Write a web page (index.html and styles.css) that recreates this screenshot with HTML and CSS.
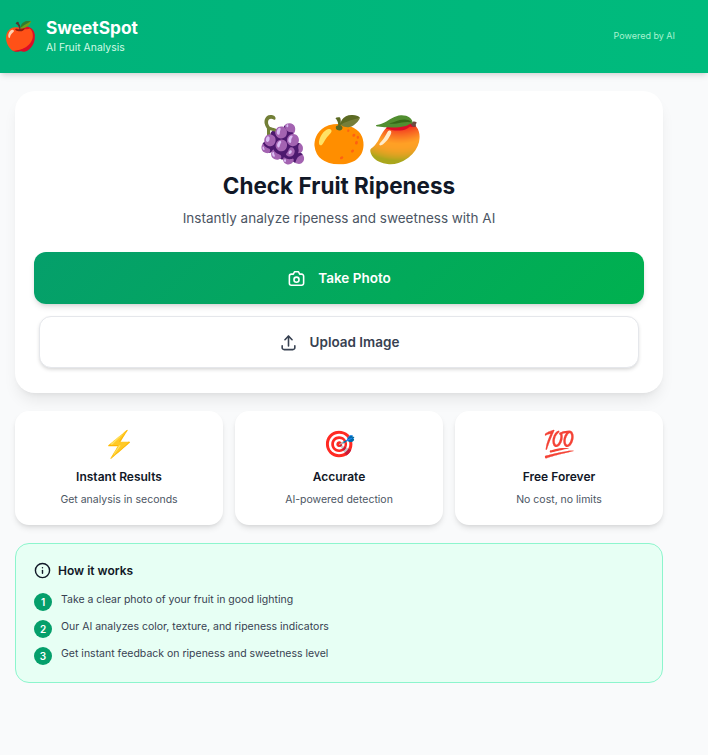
FILE: index.html
```html
<!DOCTYPE html>
<html lang="en">
<head>
    <meta charset="UTF-8">
    <meta name="viewport" content="width=device-width, initial-scale=1.0">
    <title>SweetSpot - AI Fruit Analysis</title>
    <link rel="stylesheet" href="styles.css">
</head>
<body>
    <header class="app-header">
        <div class="brand">
            <span class="brand-emoji">🍎</span>
            <div>
                <h1 class="brand-name">SweetSpot</h1>
                <p class="brand-tagline">AI Fruit Analysis</p>
            </div>
        </div>
        <span class="powered">Powered by AI</span>
    </header>

    <main class="content">
        <section class="hero">
            <div class="hero-emoji">🍇🍊🥭</div>
            <h2 class="hero-title">Check Fruit Ripeness</h2>
            <p class="hero-text">Instantly analyze ripeness and sweetness with AI</p>

            <button class="btn btn-primary">
                <svg class="btn-icon" viewBox="0 0 24 24" fill="none" stroke="currentColor" stroke-width="2" stroke-linecap="round" stroke-linejoin="round">
                    <path d="M8 6.500L9.500 3.500h5L16 6.500h2.500a2.500 2.500 0 0 1 2.500 2.500v9a2.500 2.500 0 0 1-2.500 2.500h-13A2.500 2.500 0 0 1 3 18V9a2.500 2.500 0 0 1 2.500-2.500z"/>
                    <circle cx="12" cy="13.500" r="3.200"/>
                </svg>
                Take Photo
            </button>
            <button class="btn btn-secondary">
                <svg class="btn-icon" viewBox="0 0 24 24" fill="none" stroke="currentColor" stroke-width="2" stroke-linecap="round" stroke-linejoin="round">
                    <path d="M4 16v2.500A2.500 2.500 0 0 0 6.500 21h11a2.500 2.500 0 0 0 2.500-2.500V16"/>
                    <path d="M12 16.500V4"/>
                    <path d="M7.500 8.500L12 4l4.500 4.500"/>
                </svg>
                Upload Image
            </button>
        </section>

        <section class="features">
            <div class="feature">
                <div class="feature-emoji">⚡</div>
                <h3>Instant Results</h3>
                <p>Get analysis in seconds</p>
            </div>
            <div class="feature">
                <div class="feature-emoji">🎯</div>
                <h3>Accurate</h3>
                <p>AI-powered detection</p>
            </div>
            <div class="feature">
                <div class="feature-emoji">💯</div>
                <h3>Free Forever</h3>
                <p>No cost, no limits</p>
            </div>
        </section>

        <section class="how">
            <h3 class="how-title">
                <svg class="how-icon" viewBox="0 0 24 24" fill="none" stroke="currentColor" stroke-width="2" stroke-linecap="round" stroke-linejoin="round">
                    <circle cx="12" cy="12" r="10"/>
                    <path d="M12 16v-4"/>
                    <path d="M12 8h.01"/>
                </svg>
                How it works
            </h3>
            <ol class="steps">
                <li><span class="step-num">1</span>Take a clear photo of your fruit in good lighting</li>
                <li><span class="step-num">2</span>Our AI analyzes color, texture, and ripeness indicators</li>
                <li><span class="step-num">3</span>Get instant feedback on ripeness and sweetness level</li>
            </ol>
        </section>
    </main>
</body>
</html>
```

FILE: styles.css
```css
* {
    box-sizing: border-box;
}
body {
    font-family: Inter, "Noto Sans", sans-serif;
    background-color: #f9fafb;
    margin: 0;
    min-height: 100vh;
    overflow: hidden;
}
h1, h2, h3, p {
    margin: 0;
}

/* header */
.app-header {
    height: 73px;
    padding: 0 33px 2px 3px;
    display: flex;
    align-items: center;
    justify-content: space-between;
    color: white;
    background: linear-gradient(90deg, #00b27a, #00bb7d);
    box-shadow: 0 4px 6px -1px rgba(0, 0, 0, 0.1), 0 2px 4px -2px rgba(0, 0, 0, 0.1);
}
.brand {
    display: flex;
    align-items: center;
    gap: 8px;
}
.brand-emoji {
    font-size: 28px;
    line-height: 36px;
}
.brand-name {
    font-size: 17.300px;
    line-height: 24px;
    font-weight: 700;
}
.brand-tagline {
    font-size: 10.400px;
    line-height: 16px;
    color: #d1fae5;
}
.powered {
    font-size: 9px;
    color: #a7f3d0;
}

/* main column */
.content {
    width: 648px;
    margin: 18px 0 0 15px;
}
.hero {
    height: 302px;
    padding: 20px 19px 0;
    background-color: white;
    border-radius: 20px;
    text-align: center;
    box-shadow: 0 10px 15px -3px rgba(0, 0, 0, 0.08), 0 4px 6px -4px rgba(0, 0, 0, 0.08);
}
.hero-emoji {
    font-size: 45px;
    line-height: 56px;
}
.hero-title {
    margin-top: 5px;
    font-size: 22.500px;
    line-height: 28px;
    font-weight: 700;
    color: #111827;
}
.hero-text {
    margin-top: 8px;
    font-size: 13.500px;
    line-height: 20px;
    color: #4b5563;
}

.btn {
    width: 100%;
    height: 52px;
    display: flex;
    align-items: center;
    justify-content: center;
    gap: 12px;
    border-radius: 12px;
    border: none;
    font-family: inherit;
    font-size: 13.500px;
    font-weight: 600;
    cursor: pointer;
}
.btn-icon {
    width: 19px;
    height: 19px;
}
.btn-primary {
    margin-top: 24px;
    color: white;
    background: linear-gradient(135deg, #059f6b, #00b14f);
    box-shadow: 0 4px 6px -1px rgba(0, 0, 0, 0.12), 0 2px 4px -2px rgba(0, 0, 0, 0.12);
}
.btn-secondary {
    width: 600px;
    margin: 12px auto 0;
    color: #374151;
    background: white;
    border: 1px solid #e5e7eb;
    box-shadow: 0 2px 4px -1px rgba(0, 0, 0, 0.2);
}

/* feature cards */
.features {
    margin-top: 18px;
    display: grid;
    grid-template-columns: repeat(3, 1fr);
    gap: 12px;
}
.feature {
    height: 114px;
    padding: 15px 8px 0;
    background-color: white;
    border-radius: 14px;
    text-align: center;
    box-shadow: 0 4px 6px -1px rgba(0, 0, 0, 0.1), 0 2px 4px -2px rgba(0, 0, 0, 0.1);
}
.feature-emoji {
    font-size: 26px;
    line-height: 36px;
}
.feature h3 {
    margin-top: 7px;
    font-size: 12px;
    line-height: 16px;
    font-weight: 600;
    color: #111827;
}
.feature p {
    margin-top: 7px;
    font-size: 10.500px;
    line-height: 16px;
    color: #4b5563;
}

/* how it works */
.how {
    height: 140px;
    margin-top: 18px;
    padding: 18px 18px 0;
    border: 1px solid #8df5cd;
    border-radius: 14px;
    background-color: #e7fff4;
}
.how-title {
    display: flex;
    align-items: center;
    gap: 7px;
    font-size: 12px;
    line-height: 16px;
    font-weight: 600;
    color: #111827;
}
.how-icon {
    width: 17px;
    height: 17px;
}
.steps {
    list-style: none;
    margin: 13px 0 0;
    padding: 0;
    display: flex;
    flex-direction: column;
    gap: 8px;
}
.steps li {
    display: flex;
    align-items: flex-start;
    gap: 9px;
    font-size: 10.500px;
    line-height: 16px;
    color: #374151;
}
.step-num {
    width: 18px;
    height: 18px;
    flex-shrink: 0;
    border-radius: 50%;
    display: flex;
    align-items: center;
    justify-content: center;
    margin-top: 1px;
    font-size: 10px;
    font-weight: 600;
    color: white;
    background-color: #059f6b;
}
```
